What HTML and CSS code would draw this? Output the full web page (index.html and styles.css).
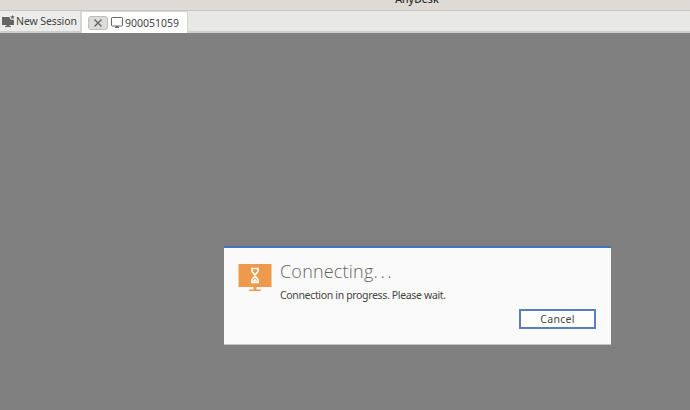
FILE: index.html
```html
<!DOCTYPE html>
<html lang="en">
<head>
<meta charset="utf-8">
<title>AnyDesk</title>
<link rel="stylesheet" href="styles.css">
</head>
<body>
<div class="app">
  <header class="titlebar"><span class="title">AnyDesk</span></header>
  <nav class="tabbar">
    <div class="tab tab-inactive">
      <svg class="icon" width="13" height="12" viewBox="0 0 13 12"><path d="M0 2h7.500l1 2.500 3.500.5v5H7.500v1H9v1H3v-1h1.500v-1H0z" fill="#666"/><path d="M10.500 0l.7 1.300 1.500.2-1.100 1 .3 1.500-1.400-.7-1.400.7.300-1.500-1.100-1 1.500-.2z" fill="#666"/></svg>
      <span>New Session</span>
    </div>
    <div class="tab tab-active">
      <button class="close" type="button" aria-label="Close">
        <svg width="10" height="8" viewBox="0 0 10 8"><path d="M1.500.5l7 7M8.500.5l-7 7" stroke="#666" stroke-width="1.400" fill="none"/></svg>
      </button>
      <svg class="icon" width="12" height="12" viewBox="0 0 12 12"><rect x=".5" y=".5" width="11" height="8.500" rx=".8" fill="#fff" stroke="#666"/><path d="M4 11h4v-1H7.200V9H4.800v1H4z" fill="#666"/></svg>
      <span>900051059</span>
    </div>
  </nav>
  <main class="canvas">
    <section class="dialog">
      <div class="dialog-body">
        <svg class="monitor" width="34" height="28" viewBox="0 0 34 28">
          <rect x=".5" y="0" width="33" height="23" fill="#ee9a4d"/>
          <path d="M15.500 23h3v2.500h4.500V27H11v-1.500h4.500z" fill="#ee9a4d"/>
          <path d="M13 4.500h8M13 18.500h8M14 5v2.500l3 3.500 3-3.500V5M14 18v-2.500l3-3.500 3 3.500V18" fill="none" stroke="#fff" stroke-width="1.600"/>
          <path d="M14.500 17.500l2.500-3 2.500 3z" fill="#fff"/>
        </svg>
        <div class="message">
          <h1>Connecting<span class="dots">...</span></h1>
          <p>Connection in progress. Please wait.</p>
        </div>
      </div>
      <div class="actions"><button class="cancel" type="button">Cancel</button></div>
    </section>
  </main>
</div>
</body>
</html>
```
FILE: styles.css
```css
* { box-sizing: border-box; }
html, body { margin: 0; padding: 0; }
body { width: 690px; height: 410px; overflow: hidden; font-family: "Noto Sans", sans-serif; background: #808080; }
.app { display: flex; flex-direction: column; height: 410px; }
.titlebar { height: 11px; background: #dedad5; border-bottom: 1px solid #c9c4bd; overflow: hidden; display: flex; justify-content: center; align-items: flex-end; padding-left: 144px; flex: none; }
.title { font-size: 10.5px; font-weight: 500; line-height: 16px; color: #2e2e2e; margin-bottom: 3px; }
.tabbar { height: 22px; flex: none; background: #e8e8e7; border-bottom: 2px solid #cfcfcd; display: flex; align-items: flex-end; font-size: 10.5px; color: #444; }
.tab { display: flex; align-items: center; white-space: nowrap; }
.tab-inactive { height: 20px; width: 81px; background: #ececeb; border-right: 1px solid #d5d5d3; gap: 1px; padding-left: 2px; letter-spacing: -.1px; }
.tab-active { height: 22px; width: 107px; margin-bottom: -2px; background: #fff; border: 1px solid #d5d5d3; border-bottom: 0; border-radius: 2px 2px 0 0; padding: 0 0 0 6px; gap: 2px; font-size: 10.5px; }
.close { width: 20px; height: 14px; padding: 0; margin-right: 1px; display: flex; align-items: center; justify-content: center; background: #dcdcdb; border: 1px solid #bdbdbb; border-radius: 3px; }
.icon { flex: none; }
.canvas { flex: 1; position: relative; background: #808080; }
.dialog { position: absolute; left: 224px; top: 213px; width: 387px; height: 99px; background: #fafafa; border-top: 2px solid #4572ba; border-bottom: 1px solid #c4c4c4; display: flex; flex-direction: column; }
.dialog-body { display: flex; gap: 8px; padding: 14px 0 0 14px; }
.monitor { flex: none; margin-top: 2px; }
.message h1 { margin: -1px 0 0; font-size: 18px; font-weight: 300; line-height: 20px; letter-spacing: .2px; color: #666; font-family: "Open Sans", "Noto Sans", sans-serif; }
.dots { letter-spacing: 2.6px; }
.message p { margin: 7px 0 0; font-size: 10.5px; line-height: 14px; letter-spacing: -.34px; color: #444; }
.actions { display: flex; justify-content: flex-end; padding: 7px 15px 0 0; }
.cancel { width: 77px; height: 20px; padding: 0; background: #fff; border: 2px solid #5a7fc0; font: 10.5px "Noto Sans", sans-serif; letter-spacing: .3px; color: #444; }
```
